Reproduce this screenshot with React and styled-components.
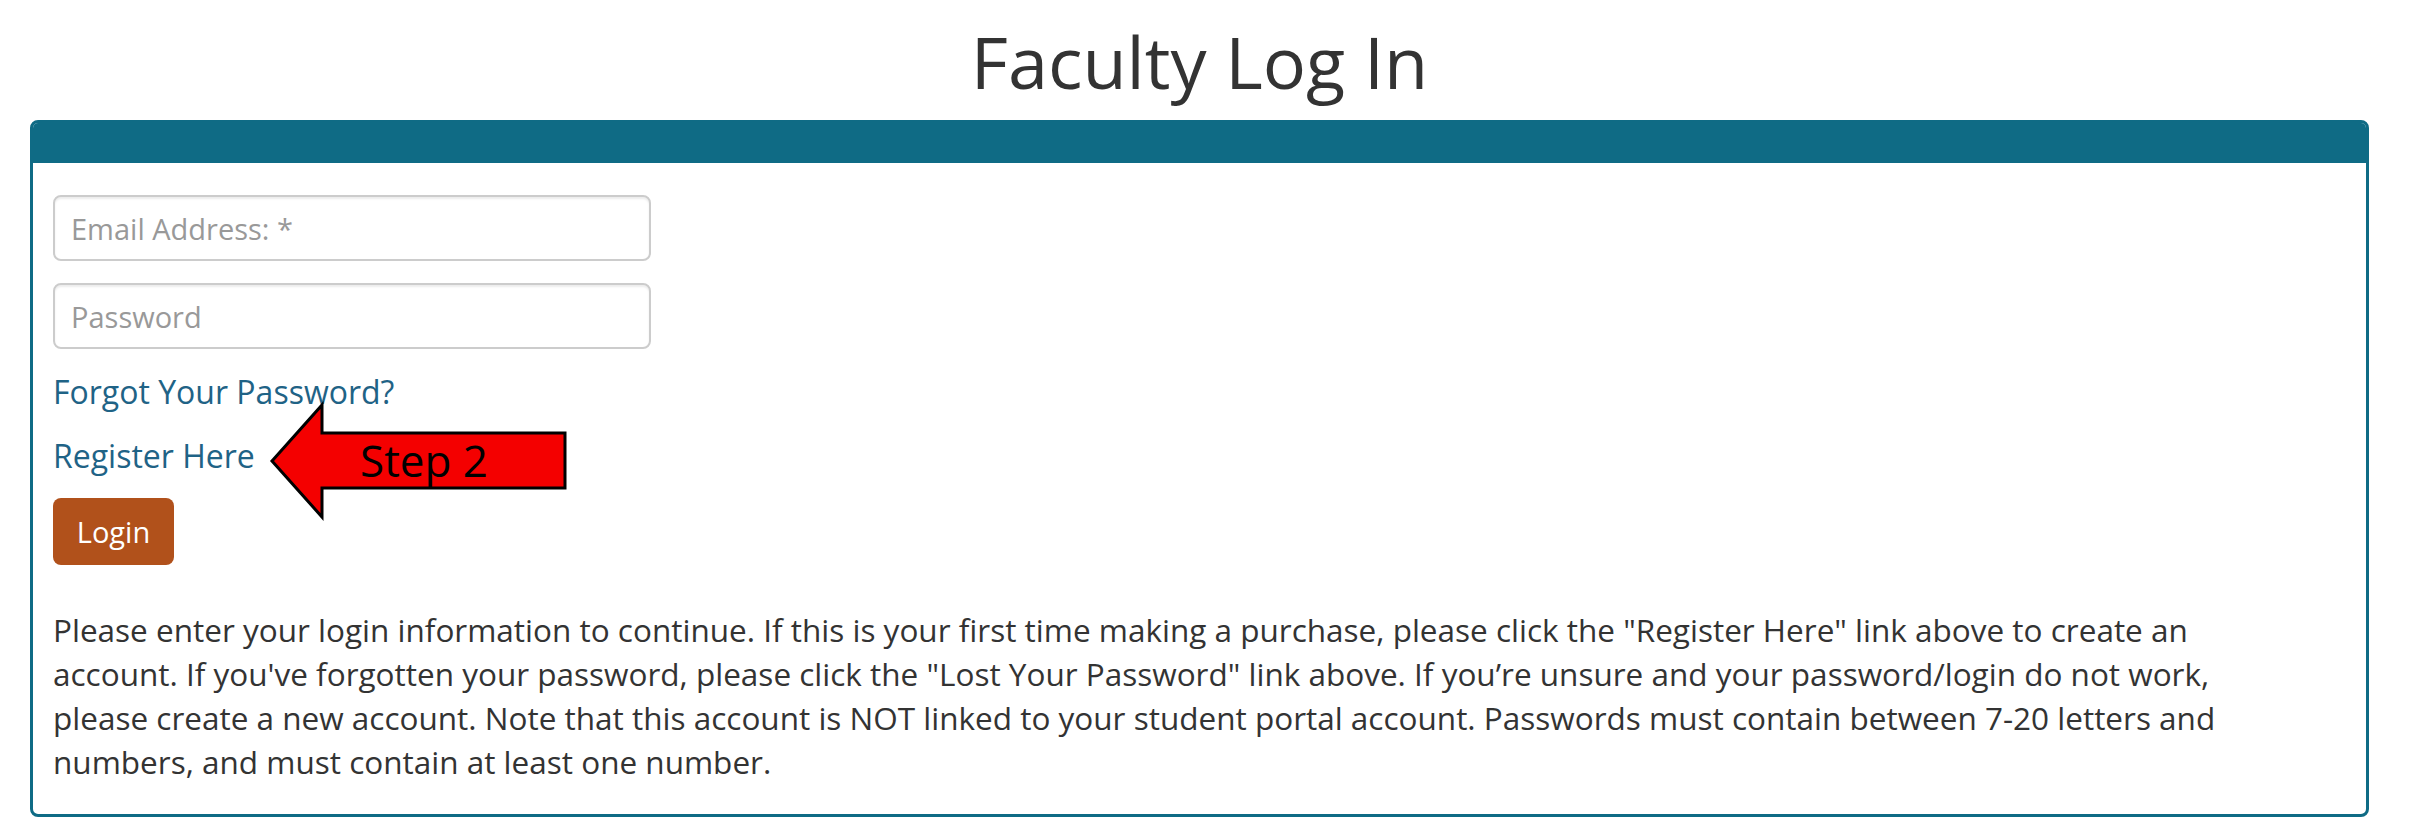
import React from "react";
import styled, { createGlobalStyle } from "styled-components";

const Global = createGlobalStyle`
  html, body { margin: 0; padding: 0; background: #fff; }
  body { font-family: "Open Sans", "Noto Sans", sans-serif; color: #333; }
`;

const Page = styled.div`
  padding: 21px 49px 0 30px;
`;

const Title = styled.h1`
  margin: 0 0 19px;
  text-align: center;
  font-weight: 400;
  font-size: 72px;
  line-height: 80px;
  color: #333;
`;

const Panel = styled.section`
  border: 3px solid #0f6b85;
  border-radius: 8px;
  overflow: hidden;
`;

const PanelHeading = styled.div`
  height: 40px;
  background: #0f6b85;
`;

const PanelBody = styled.div`
  position: relative;
  padding: 32px 20px 30px;
  display: flex;
  flex-direction: column;
  align-items: flex-start;
`;

const Input = styled.input`
  box-sizing: border-box;
  width: 598px;
  height: 66px;
  margin: 0 0 ${(p) => p.$gap}px;
  padding: 0 16px;
  border: 2px solid #ccc;
  border-radius: 8px;
  font-family: inherit;
  font-size: 29px;
  color: #555;
  box-shadow: inset 0 2px 2px rgba(0, 0, 0, 0.075);
  &::placeholder { color: #999; }
`;

const LinkLine = styled.a`
  display: block;
  font-size: 32px;
  line-height: 44px;
  color: #1f6386;
  text-decoration: none;
  margin-bottom: 20px;
`;

const LoginButton = styled.button`
  box-sizing: border-box;
  width: 121px;
  height: 67px;
  border: none;
  border-radius: 8px;
  background: #b1511b;
  color: #fff;
  font-family: inherit;
  font-size: 29px;
  padding: 0;
  margin-bottom: 43px;
`;

const Info = styled.p`
  margin: 0;
  max-width: 2230px;
  font-size: 31.5px;
  line-height: 44px;
  color: #333;
`;

const Callout = styled.svg`
  position: absolute;
  left: 235px;
  top: 239px;
  overflow: visible;
`;

function StepArrow() {
  return (
    <Callout width="300" height="118" viewBox="0 0 300 118">
      <polygon
        points="4,59 54,3 54,31 297,31 297,86 54,86 54,115"
        fill="#f40000"
        stroke="#000"
        strokeWidth="3"
        strokeLinejoin="miter"
      />
      <text
        x="92"
        y="75"
        fontFamily="'Open Sans', 'Noto Sans', sans-serif"
        fontSize="44"
        fill="#000"
      >
        Step 2
      </text>
    </Callout>
  );
}

export default function App() {
  return (
    <Page>
      <Global />
      <Title>Faculty Log In</Title>
      <Panel>
        <PanelHeading />
        <PanelBody>
          <Input type="email" placeholder="Email Address: *" $gap={22} />
          <Input type="password" placeholder="Password" $gap={21} />
          <LinkLine href="#">Forgot Your Password?</LinkLine>
          <LinkLine href="#">Register Here</LinkLine>
          <LoginButton>Login</LoginButton>
          <Info>
            Please enter your login information to continue. If this is your first time making a
            purchase, please click the "Register Here" link above to create an account. If you've
            forgotten your password, please click the "Lost Your Password" link above. If you’re
            unsure and your password/login do not work, please create a new account. Note that this
            account is NOT linked to your student portal account. Passwords must contain between
            7-20 letters and numbers, and must contain at least one number.
          </Info>
          <StepArrow />
        </PanelBody>
      </Panel>
    </Page>
  );
}
